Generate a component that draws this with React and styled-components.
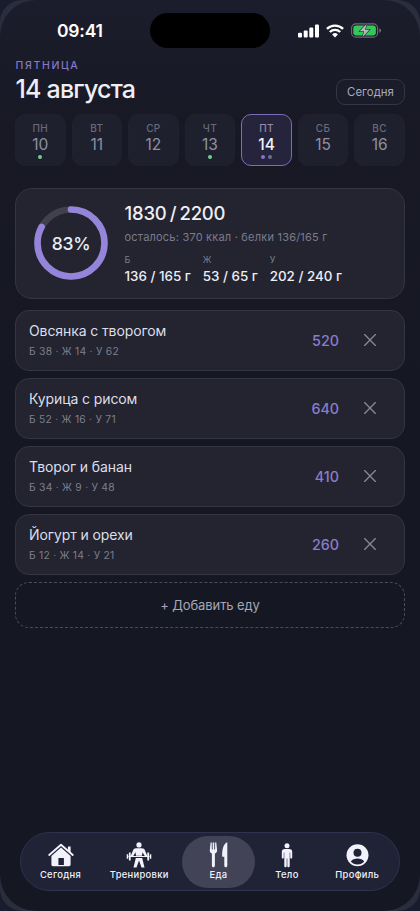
import React from 'react';
import styled, { createGlobalStyle } from 'styled-components';

const GlobalStyle = createGlobalStyle`
*, *::before, *::after {
box-sizing: border-box;
}
body {
margin: 0;
background: #191c2c;
font-family: Inter, "Liberation Sans", sans-serif;
}
button {
font: inherit;
background: none;
border: 0;
padding: 0;
margin: 0;
}
`

const Frame = styled.div`
width: 420px;
height: 911px;
overflow: hidden;
border-radius: 22px;
background: #2b2d3d;
`
const Screen = styled.div`
display: flex;
flex-direction: column;
height: 911px;
padding: 0 15px 20px;
border-radius: 36px;
background: linear-gradient(180deg, #1c1d2c 0, #181925 120px, #151722 400px, #151722 100%);
color: #eeeef6;
`
const StatusBar = styled.div`
display: grid;
grid-template-columns: 135px 120px 1fr;
align-items: center;
height: 35px;
margin: 13px 0 10px;
`
const Clock = styled.div`
padding-left: 42px;
font-size: 17.5px;
font-weight: 600;
letter-spacing: -0.2px;
color: #fff;
`
const Island = styled.div`
height: 35px;
border-radius: 18px;
background: #000;
`
const StatusIcons = styled.div`
display: flex;
align-items: center;
gap: 7px;
padding-left: 28px;
`
const Header = styled.header`
display: flex;
justify-content: space-between;
align-items: flex-end;
height: 47px;
`
const Weekday = styled.div`
padding-left: 0.5px;
font-size: 10.5px;
line-height: 15px;
font-weight: 500;
letter-spacing: 1.65px;
color: #8577c9;
`
const Title = styled.h1`
margin: 0;
padding-left: 0.5px;
font-size: 25px;
line-height: 32px;
font-weight: 500;
letter-spacing: -0.8px;
`
const TodayButton = styled.button`
width: 69px;
height: 26px;
border: 1px solid #343644;
border-radius: 9px;
background: #1b1c29;
font-size: 11.4px;
color: #a9aaba;
`
const Week = styled.div`
display: grid;
grid-template-columns: repeat(7, 1fr);
gap: 6px;
margin-top: 9px;
`
const Day = styled.button`
display: flex;
flex-direction: column;
align-items: center;
height: 51.5px;
padding-top: 6px;
border: 1px solid ${p => p.$active ? '#7a6eb8' : '#20212f'};
border-radius: 10px;
background: ${p => p.$active ? '#26243d' : '#1f202e'};
color: ${p => p.$active ? '#f3f3fa' : '#8e90a2'};
`
const DayName = styled.span`
font-size: 10px;
line-height: 14px;
font-weight: 500;
letter-spacing: 0.4px;
color: ${p => p.$active ? '#8e8ca6' : '#686a7b'};
`
const DayNumber = styled.span`
font-size: 15.5px;
line-height: 20px;
font-weight: ${p => p.$active ? 500 : 400};
`
const Dots = styled.span`
display: flex;
gap: 3px;
`
const Dot = styled.span`
width: 4px;
height: 4px;
border-radius: 50%;
background: ${p => p.$color};
`
const Card = styled.section`
border: 1px solid #343541;
background: #232430;
`
const Summary = styled(Card)`
display: flex;
height: 111px;
margin: 22px 0 11px;
padding: 12.5px 18px;
border-radius: 17px;
`
const RingBox = styled.div`
display: grid;
place-items: center;
width: 74px;
height: 84px;
margin-right: 16.5px;
& > * {
grid-area: 1 / 1;
}
`
const Percent = styled.span`
font-size: 17.5px;
font-weight: 500;
letter-spacing: -0.3px;
`
const Calories = styled.div`
font-size: 18.5px;
line-height: 24px;
font-weight: 500;
letter-spacing: -0.2px;
word-spacing: -1.6px;
`
const Remaining = styled.div`
margin-top: 4px;
font-size: 11px;
line-height: 17px;
letter-spacing: 0.21px;
color: #7a7c8b;
`
const Macros = styled.div`
display: flex;
gap: 12px;
margin-top: 7px;
`
const MacroName = styled.div`
font-size: 9px;
line-height: 13px;
color: #7a7c8b;
`
const MacroValue = styled.div`
margin-top: 1px;
font-size: 13.4px;
line-height: 18px;
font-weight: 500;
white-space: nowrap;
`
const MealList = styled.div`
display: flex;
flex-direction: column;
gap: 7px;
`
const Meal = styled(Card)`
display: flex;
align-items: center;
height: 61px;
padding: 0 28px 0 13px;
border-radius: 14px;
`
const MealInfo = styled.div`
flex: 1;
`
const MealName = styled.div`
font-size: 14px;
line-height: 22px;
letter-spacing: -0.1px;
color: #dddee8;
`
const MealMeta = styled.div`
font-size: 10.3px;
line-height: 18px;
letter-spacing: 0.25px;
color: #7d7f8e;
`
const Kcal = styled.div`
margin-right: 25px;
font-size: 14.3px;
font-weight: 500;
color: #8a7dcd;
`
const AddButton = styled.button`
display: block;
height: 46px;
margin-top: 7px;
color: #a6a7b8;
font-size: 13px;
letter-spacing: -0.1px;
`
const AddOutline = styled.div`
display: grid;
place-items: center;
height: 46px;
border: 1px dashed #4b4d5b;
border-radius: 14px;
`
const TabBar = styled.nav`
display: flex;
align-items: center;
height: 59px;
margin: auto 5px 0;
padding: 0 3.5px;
border: 1px solid #303250;
border-radius: 30px;
background: #202235;
`
const Tab = styled.button`
display: flex;
flex-direction: column;
align-items: center;
width: ${p => p.$width}px;
height: 52px;
padding-top: 6px;
border-radius: 26px;
background: ${p => p.$active ? '#424356' : 'transparent'};
color: #f1f2fc;
`
const TabLabel = styled.span`
margin-top: 0.6px;
font-size: 9.4px;
line-height: 14px;
font-weight: 500;
letter-spacing: 0.32px;
white-space: nowrap;
`

const days = [
    { name: 'ПН', number: 10, dots: ['#6fcf97'] },
    { name: 'ВТ', number: 11, dots: [] },
    { name: 'СР', number: 12, dots: [] },
    { name: 'ЧТ', number: 13, dots: ['#6fcf97'] },
    { name: 'ПТ', number: 14, dots: ['#8577c9', '#6d6e88'], active: true },
    { name: 'СБ', number: 15, dots: [] },
    { name: 'ВС', number: 16, dots: [] }
];

const macros = [
    { name: 'Б', value: '136 / 165 г' },
    { name: 'Ж', value: '53 / 65 г' },
    { name: 'У', value: '202 / 240 г' }
];

const meals = [
    { name: 'Овсянка с творогом', meta: 'Б 38 · Ж 14 · У 62', kcal: 520 },
    { name: 'Курица с рисом', meta: 'Б 52 · Ж 16 · У 71', kcal: 640 },
    { name: 'Творог и банан', meta: 'Б 34 · Ж 9 · У 48', kcal: 410 },
    { name: 'Йогурт и орехи', meta: 'Б 12 · Ж 14 · У 21', kcal: 260 }
];

const Signal = () => (
    <svg width="21" height="14" viewBox="0 0 21 14" fill="#fff">
        <rect x="0" y="8.8" width="4" height="4.7" rx="1.1" />
        <rect x="5.7" y="6.4" width="4" height="7.1" rx="1.1" />
        <rect x="11.3" y="3.6" width="4" height="9.9" rx="1.1" />
        <rect x="17" y="0.5" width="4" height="13" rx="1.1" />
    </svg>
);

const Wifi = () => (
    <svg width="18" height="14" viewBox="0 0 18 14" fill="none" stroke="#fff" strokeWidth="2.3">
        <path d="M.9 4.9A11.5 11.5 0 0 1 17.1 4.9" />
        <path d="M3.8 8A7.4 7.4 0 0 1 14.2 8" />
        <path d="M9 13.4 6.1 10.5A4.1 4.1 0 0 1 11.9 10.5Z" fill="#fff" stroke="none" />
    </svg>
);

const Battery = () => (
    <svg width="31" height="15" viewBox="0 0 31 15">
        <rect x=".6" y=".9" width="26" height="13.2" rx="4.2" fill="none" stroke="#6b6c76" strokeWidth="1.1" />
        <rect x="2.3" y="2.6" width="22.6" height="9.8" rx="2.8" fill="#35c759" />
        <path d="M28.4 5.2v4.6c1-.4 1.6-1.3 1.6-2.3s-.6-1.9-1.6-2.3z" fill="#777" />
        <path d="M15.8.8 8.7 8.3h4.4L11.4 14.2 18.5 6.7h-4.4z" fill="#b6b7bd" stroke="#1b1c29" strokeWidth="1.1" paintOrder="stroke" />
    </svg>
);

const ProgressRing = ({ value }) => (
    <svg width="74" height="74" viewBox="0 0 74 74" fill="none" strokeWidth="6.6">
        <circle cx="37" cy="37" r="33.5" stroke="#40414c" />
        <circle cx="37" cy="37" r="33.5" stroke="#9485db" strokeLinecap="round" pathLength="100"
            strokeDasharray={`${value} 100`} transform="rotate(-90 37 37)" />
    </svg>
);

const Cross = () => (
    <svg width="12" height="12" viewBox="0 0 12 12" stroke="#858693" strokeWidth="1.35" strokeLinecap="round">
        <path d="M.6.6 11.4 11.4M11.4.6.6 11.4" />
    </svg>
);

const HomeIcon = () => (
    <svg width="28" height="26" viewBox="0 0 28 26" fill="currentColor">
        <path d="M2.2 13 14 2.8 25.8 13" fill="none" stroke="currentColor" strokeWidth="1.9" strokeLinecap="round" strokeLinejoin="round" />
        <path d="M20.9 4.4h2.7v6.4l-2.7-2.4z" />
        <path fillRule="evenodd" d="M14 5.4 23.6 14v8.6c0 1-.7 1.700-1.700 1.700H6.100c-1 0-1.700-.7-1.700-1.700V14zM11.400 15.900v7.100h5.500v-7.100z" />
    </svg>
);

const WorkoutIcon = () => (
    <svg width="28" height="26" viewBox="0 0 28 26" fill="currentColor">
        <circle cx="14" cy="2.9" r="2.6" />
        <path d="M11 6.2h6c1.5 0 2.3.7 2.8 1.9l2.5 6-1.8 1.1-3-4.9-.5 3.5h-6l-.5-3.5-3 4.9-1.8-1.1 2.5-6c.5-1.2 1.3-1.9 2.8-1.9z" />
        <path d="M3.500 13.900h21v1.200h-21z" />
        <path d="M3.900 10.600h1.800v8H3.900zM22.300 10.600h1.800v8h-1.800zM1.700 12.300h1.500v4.500H1.700zM24.800 12.300h1.500v4.500h-1.500z" />
        <path d="M10.800 15.900h6.400l2.300 9.600h-3L14 18.600l-2.500 6.900h-3z" />
    </svg>
);

const FoodIcon = () => (
    <svg width="28" height="26" viewBox="0 0 28 26" fill="currentColor">
        <path d="M5.600.500h1.200v7h.9v-7h1.500v7h.9v-7h1.200l.8 7.700c.1 1.700-.8 2.700-2.200 3.300v12c0 1.100-.6 1.800-1.500 1.800s-1.500-.7-1.500-1.800v-12C5.500 10.900 4.700 9.900 4.800 8.200z" />
        <path d="M22.300.300v23.200c0 1.100-.6 1.800-1.500 1.800s-1.500-.7-1.500-1.800V14.700h-2.100C16.900 8.300 18.200 1.900 22.300.300z" />
    </svg>
);

const BodyIcon = () => (
    <svg width="28" height="26" viewBox="0 0 28 26" fill="currentColor">
        <circle cx="14" cy="3.700" r="2.500" />
        <path d="M11.800 7h4.400c2 0 3 1.100 3 3v5.600c0 1.500-2 1.500-2 0v-5h-.5v13.300c0 1.700-2.400 1.700-2.400 0v-7.300h-.6v7.300c0 1.700-2.400 1.700-2.400 0V10.600h-.5v5c0 1.500-2 1.500-2 0V10c0-1.900 1-3 3-3z" />
    </svg>
);

const ProfileIcon = () => (
    <svg width="28" height="26" viewBox="0 0 28 26">
        <circle cx="14.500" cy="13.300" r="11" fill="currentColor" />
        <circle cx="14.500" cy="10.700" r="4" fill="#202235" />
        <path d="M7.800 19.500c1.600-2.200 4-3 6.700-3s5.100.8 6.700 3c-1.700 2.100-4 3-6.700 3s-5-.9-6.700-3z" fill="#202235" />
    </svg>
);

const tabs = [
    { label: 'Сегодня', icon: HomeIcon, width: 72 },
    { label: 'Тренировки', icon: WorkoutIcon, width: 85.5 },
    { label: 'Еда', icon: FoodIcon, width: 73, active: true },
    { label: 'Тело', icon: BodyIcon, width: 64 },
    { label: 'Профиль', icon: ProfileIcon, width: 76.5 }
];

const App = () => {
    return (
        <>
        <GlobalStyle />
        <Frame>
            <Screen>
                <StatusBar>
                    <Clock>09:41</Clock>
                    <Island />
                    <StatusIcons>
                        <Signal />
                        <Wifi />
                        <Battery />
                    </StatusIcons>
                </StatusBar>
                <Header>
                    <div>
                        <Weekday>ПЯТНИЦА</Weekday>
                        <Title>14 августа</Title>
                    </div>
                    <TodayButton>Сегодня</TodayButton>
                </Header>
                <Week>
                    {days.map(day => (
                        <Day key={day.number} $active={day.active}>
                            <DayName $active={day.active}>{day.name}</DayName>
                            <DayNumber $active={day.active}>{day.number}</DayNumber>
                            <Dots>
                                {day.dots.map(color => <Dot key={color} $color={color} />)}
                            </Dots>
                        </Day>
                    ))}
                </Week>
                <Summary>
                    <RingBox>
                        <ProgressRing value={83} />
                        <Percent>83%</Percent>
                    </RingBox>
                    <div>
                        <Calories>1830 / 2200</Calories>
                        <Remaining>осталось: 370 ккал · белки 136/165 г</Remaining>
                        <Macros>
                            {macros.map(macro => (
                                <div key={macro.name}>
                                    <MacroName>{macro.name}</MacroName>
                                    <MacroValue>{macro.value}</MacroValue>
                                </div>
                            ))}
                        </Macros>
                    </div>
                </Summary>
                <MealList>
                    {meals.map(meal => (
                        <Meal key={meal.name}>
                            <MealInfo>
                                <MealName>{meal.name}</MealName>
                                <MealMeta>{meal.meta}</MealMeta>
                            </MealInfo>
                            <Kcal>{meal.kcal}</Kcal>
                            <Cross />
                        </Meal>
                    ))}
                </MealList>
                <AddButton>
                    <AddOutline>+ Добавить еду</AddOutline>
                </AddButton>
                <TabBar>
                    {tabs.map(({ label, icon: Icon, width, active }) => (
                        <Tab key={label} $width={width} $active={active}>
                            <Icon />
                            <TabLabel>{label}</TabLabel>
                        </Tab>
                    ))}
                </TabBar>
            </Screen>
        </Frame>
        </>
    )
}

export default App
